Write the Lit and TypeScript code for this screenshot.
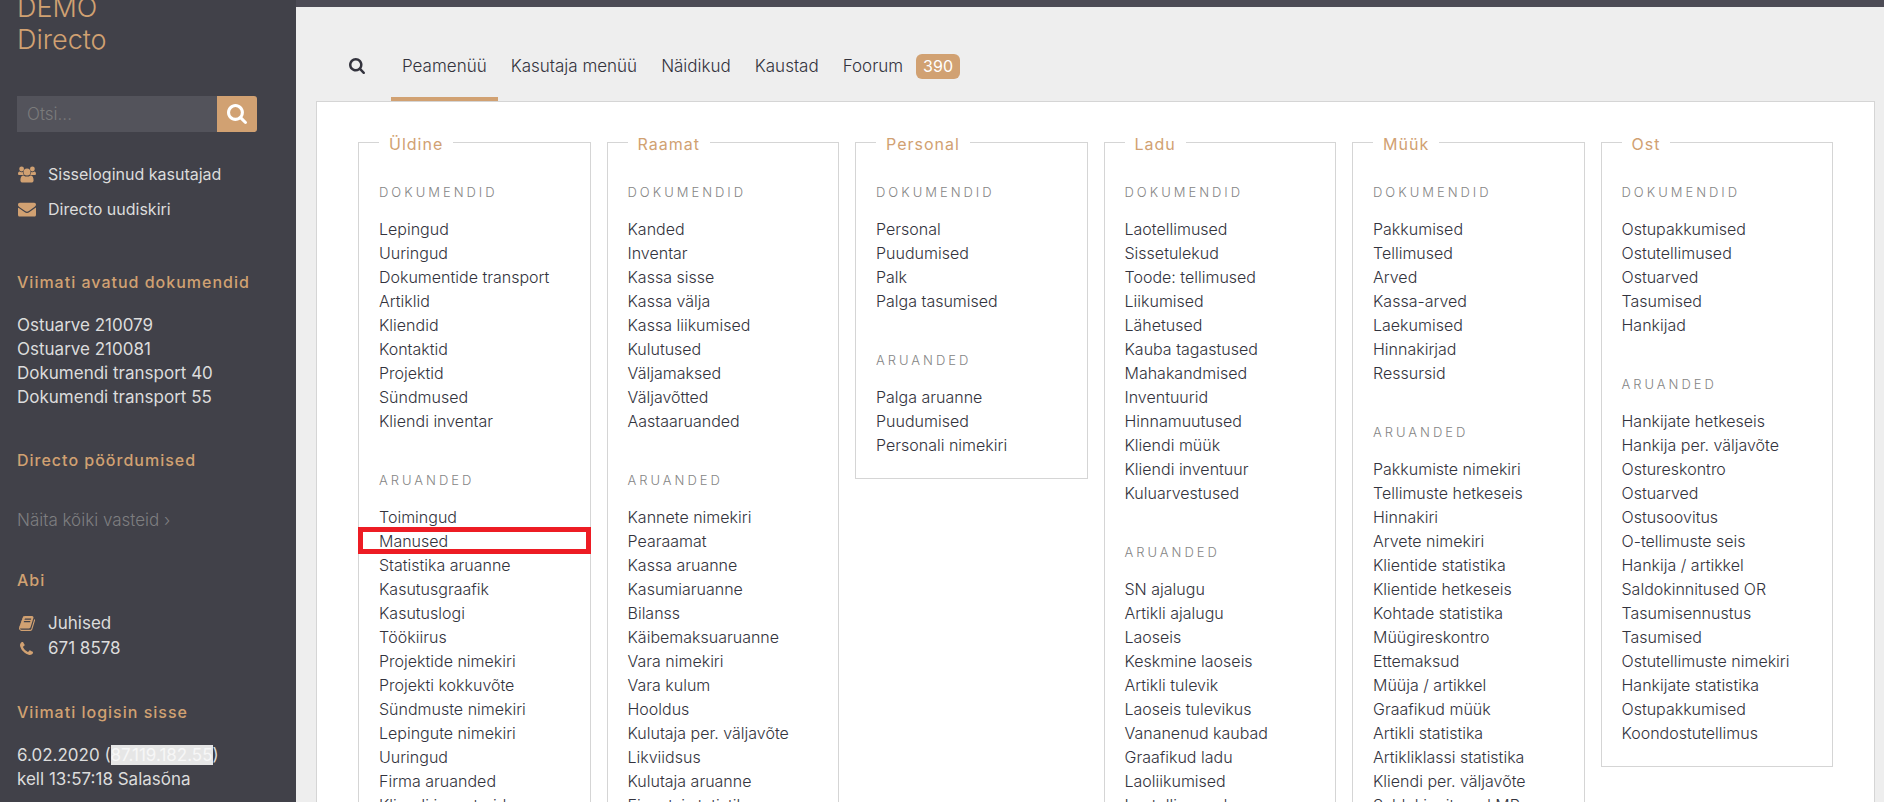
import { LitElement, html, css, svg, nothing } from "lit";
import { customElement, property, state } from "lit/decorators.js";
import { classMap } from "lit/directives/class-map.js";

const icons = {
  search: {
    box: "0 0 1664 1664",
    body: svg`<path d="M1152 704q0-185-131.500-316.500T704 256 387.500 387.500 256 704t131.500 316.500T704 1152t316.500-131.500T1152 704zm512 832q0 52-38 90t-90 38q-54 0-90-38l-343-342q-179 124-399 124-143 0-273.500-55.500t-225-150-150-225T0 704t55.500-273.500 150-225 225-150T704 0t273.500 55.500 225 150 150 225T1408 704q0 220-124 399l343 343q37 37 37 90z"/>`,
  },
  users: {
    box: "0 0 18 17",
    body: svg`<circle cx="3.600" cy="3" r="2.400"/><circle cx="14.400" cy="3" r="2.400"/><path d="M0 8.200C0 6.500.6 5.500 1.600 5.500c.6.400 1.300.7 2 .7.500 0 .9-.1 1.300-.3 0 1.200.3 2.100.9 3H1.700C.7 8.900 0 8.700 0 8.200zM18 8.200c0-1.700-.6-2.700-1.600-2.700-.6.400-1.300.7-2 .7-.5 0-.9-.1-1.300-.3 0 1.200-.3 2.100-.9 3h4.100c1 0 1.700-.2 1.700-.7z"/><circle cx="9" cy="6" r="3.500"/><path d="M5.600 9.400c1 .8 2.100 1.200 3.400 1.200s2.400-.4 3.400-1.200c2.200 0 3.200 2 3.200 4.900 0 1.400-.9 2.300-2.400 2.300H4.800c-1.500 0-2.400-.9-2.400-2.300 0-2.900 1-4.900 3.200-4.900z"/>`,
  },
  mail: {
    box: "0 0 18 16",
    body: svg`<path d="M0 3.200C0 2 .7 1.200 1.800 1.200h14.400C17.300 1.200 18 2 18 3.100c0 .9-.6 1.700-1.300 2.200L10.900 9.400c-1.300 1-2.500 1-3.800 0L1.300 5.400C.6 4.900 0 4.100 0 3.200z"/><path d="M0 5.900c.2.300.5.500.8.700l5.700 4c1.700 1.200 3.300 1.200 5 0l5.700-4c.3-.2.600-.5.800-.7v7.300c0 1.200-.7 1.900-1.800 1.900H1.800C.7 15.100 0 14.400 0 13.200z"/>`,
  },
  book: {
    box: "0 128 1664 1536",
    body: svg`<path d="M1639 478q40 57 18 129l-275 906q-19 64-76.500 107.500t-122.500 43.500h-923q-77 0-148.500-53.500t-99.500-131.500q-24-67-2-127 0-4 3-27t4-37q1-8-3-21.500t-3-19.500q2-11 8-21t16.500-23.500 16.500-23.500q23-38 45-91.500t30-91.500q3-10 .5-30t-.5-28q3-11 17-28t17-23q21-36 42-92t25-90q1-9-2.500-32t.5-28q4-13 22-30.500t22-22.500q19-26 42.500-84.500t27.500-96.500q1-8-3-25.500t-2-26.500q2-8 9-18t18-23 17-21q8-12 16.500-30.500t15-35 16-36 19.500-32 26.500-23.500 36-11.500 47.500 5.500l-1 3q38-9 51-9h761q74 0 114 56t18 130l-274 906q-36 119-71.500 153.500t-128.500 34.500h-869q-27 0-38 15-11 16-1 43 24 70 144 70h923q29 0 56-15.500t35-41.500l300-987q7-22 5-57 38 15 59 43zm-1064 2q-4 13 2 22.500t20 9.500h608q13 0 25.500-9.500t16.500-22.500l21-64q4-13-2-22.500t-20-9.500h-608q-13 0-25.500 9.500t-16.500 22.500zm-83 256q-4 13 2 22.500t20 9.500h608q13 0 25.500-9.500t16.500-22.500l21-64q4-13-2-22.500t-20-9.500h-608q-13 0-25.500 9.500t-16.500 22.500z"/>`,
  },
  phone: {
    box: "0 0 1408 1408",
    body: svg`<path d="M1408 1112q0 27-10 70.500t-21 68.500q-21 50-122 106-94 51-186 51-27 0-53-3.500t-57.500-12.500-47-14.500-55.500-20.500-49-18q-98-35-175-83-127-79-264-216t-216-264q-48-77-83-175-3-9-18-49t-20.500-55.500-14.500-47-12.500-57.500-3.500-53q0-92 51-186 56-101 106-122 25-11 68.500-21t70.500-10q14 0 21 3 18 6 53 76 11 19 30 54t35 63.500 31 53.500q3 4 17.500 25t21.500 35.500 7 28.500q0 20-28.500 50t-62 55-62 53-28.500 46q0 9 5 22.500t8.500 20.500 14 24 11.500 19q76 137 174 235t235 174q2 1 19 11.500t24 14 20.500 8.500 22.500 5q18 0 46-28.500t53-62 55-62 50-28.500q14 0 28.500 7t35.500 21.500 25 17.500q25 15 53.500 31t63.500 35 54 30q70 35 76 53 3 7 3 21z"/>`,
  },
};

type IconName = keyof typeof icons;

@customElement("app-icon")
class AppIcon extends LitElement {
  @property() name: IconName = "search";

  static styles = css`
    :host { display: inline-flex; }
    svg { display: block; width: 100%; height: 100%; fill: currentColor; }
  `;

  render() {
    const icon = icons[this.name];
    return html`<svg viewBox=${icon.box} aria-hidden="true">${icon.body}</svg>`;
  }
}

interface Group { title: string; items: string[]; marked?: string; }
interface Section { title: string; groups: Group[]; }

const docs = (...items: string[]): Group => ({ title: "Dokumendid", items });
const reports = (...items: string[]): Group => ({ title: "Aruanded", items });

const sections: Section[] = [
  {
    title: "Üldine",
    groups: [
      docs("Lepingud", "Uuringud", "Dokumentide transport", "Artiklid", "Kliendid", "Kontaktid", "Projektid", "Sündmused", "Kliendi inventar"),
      {
        ...reports("Toimingud", "Manused", "Statistika aruanne", "Kasutusgraafik", "Kasutuslogi", "Töökiirus", "Projektide nimekiri", "Projekti kokkuvõte", "Sündmuste nimekiri", "Lepingute nimekiri", "Uuringud", "Firma aruanded", "Kliendi inventarid"),
        marked: "Manused",
      },
    ],
  },
  {
    title: "Raamat",
    groups: [
      docs("Kanded", "Inventar", "Kassa sisse", "Kassa välja", "Kassa liikumised", "Kulutused", "Väljamaksed", "Väljavõtted", "Aastaaruanded"),
      reports("Kannete nimekiri", "Pearaamat", "Kassa aruanne", "Kasumiaruanne", "Bilanss", "Käibemaksuaruanne", "Vara nimekiri", "Vara kulum", "Hooldus", "Kulutaja per. väljavõte", "Likviidsus", "Kulutaja aruanne", "Finantsi statistika"),
    ],
  },
  {
    title: "Personal",
    groups: [
      docs("Personal", "Puudumised", "Palk", "Palga tasumised"),
      reports("Palga aruanne", "Puudumised", "Personali nimekiri"),
    ],
  },
  {
    title: "Ladu",
    groups: [
      docs("Laotellimused", "Sissetulekud", "Toode: tellimused", "Liikumised", "Lähetused", "Kauba tagastused", "Mahakandmised", "Inventuurid", "Hinnamuutused", "Kliendi müük", "Kliendi inventuur", "Kuluarvestused"),
      reports("SN ajalugu", "Artikli ajalugu", "Laoseis", "Keskmine laoseis", "Artikli tulevik", "Laoseis tulevikus", "Vananenud kaubad", "Graafikud ladu", "Laoliikumised", "Laotellimused"),
    ],
  },
  {
    title: "Müük",
    groups: [
      docs("Pakkumised", "Tellimused", "Arved", "Kassa-arved", "Laekumised", "Hinnakirjad", "Ressursid"),
      reports("Pakkumiste nimekiri", "Tellimuste hetkeseis", "Hinnakiri", "Arvete nimekiri", "Klientide statistika", "Klientide hetkeseis", "Kohtade statistika", "Müügireskontro", "Ettemaksud", "Müüja / artikkel", "Graafikud müük", "Artikli statistika", "Artikliklassi statistika", "Kliendi per. väljavõte", "Saldokinnitused MR"),
    ],
  },
  {
    title: "Ost",
    groups: [
      docs("Ostupakkumised", "Ostutellimused", "Ostuarved", "Tasumised", "Hankijad"),
      reports("Hankijate hetkeseis", "Hankija per. väljavõte", "Ostureskontro", "Ostuarved", "Ostusoovitus", "O-tellimuste seis", "Hankija / artikkel", "Saldokinnitused OR", "Tasumisennustus", "Tasumised", "Ostutellimuste nimekiri", "Hankijate statistika", "Ostupakkumised", "Koondostutellimus"),
    ],
  },
];

@customElement("menu-section")
class MenuSection extends LitElement {
  @property({ attribute: false }) section!: Section;

  static styles = css`
    :host { display: block; min-width: 0; }
    fieldset {
      margin: 0;
      min-width: 0;
      padding: 24px 20px 21px;
      border: 1px solid #d5d5d5;
    }
    legend {
      padding: 4px 10px 0;
      font-size: 16px;
      line-height: 24px;
      font-weight: 400;
      letter-spacing: 1px;
      color: #d1a172;
    }
    h3 {
      margin: 0 0 13px;
      font-size: 13px;
      line-height: 24px;
      font-weight: 300;
      letter-spacing: 3px;
      text-transform: uppercase;
      color: #858585;
    }
    ul { margin: 0; padding: 0; list-style: none; }
    ul + h3 { margin-top: 35px; }
    li { position: relative; }
    a {
      display: block;
      line-height: 24px;
      color: inherit;
      text-decoration: none;
      white-space: nowrap;
    }
    a:hover { color: #d1a172; }
    .marked::after {
      content: "";
      position: absolute;
      inset: -2px -21px -1px;
      border: 5px solid #ed1c24;
      pointer-events: none;
    }
  `;

  render() {
    return html`
      <fieldset>
        <legend>${this.section.title}</legend>
        ${this.section.groups.map((g) => html`
          <h3>${g.title}</h3>
          <ul>
            ${g.items.map((item) => html`
              <li class=${classMap({ marked: item === g.marked })}><a href="#">${item}</a></li>
            `)}
          </ul>
        `)}
      </fieldset>
    `;
  }
}

@customElement("side-bar")
class SideBar extends LitElement {
  static styles = css`
    :host {
      display: block;
      box-sizing: border-box;
      padding: 0 17px;
      overflow: hidden;
      background: #414149;
      color: #dcdcdc;
      font-size: 17px;
      font-weight: 400;
    }
    h1 {
      margin: -8px 0 40px;
      font-size: 27px;
      line-height: 32px;
      font-weight: 300;
      color: #d1a172;
    }
    h2 {
      margin: 0 0 19px;
      font-size: 16px;
      line-height: 24px;
      font-weight: 500;
      letter-spacing: 1px;
      white-space: nowrap;
      color: #d1a172;
    }
    form { display: flex; width: 240px; max-width: 100%; margin-bottom: 25px; }
    input {
      flex: 1;
      min-width: 0;
      height: 36px;
      box-sizing: border-box;
      padding: 0 10px;
      border: 0;
      border-radius: 0;
      background: #53535b;
      color: #fff;
      font: inherit;
      font-weight: 300;
    }
    input::placeholder { color: #7b7b7b; opacity: 1; }
    button {
      display: flex;
      align-items: center;
      justify-content: center;
      width: 40px;
      padding: 0;
      border: 0;
      border-radius: 0 3px 3px 0;
      background: #d1a172;
      color: #fff;
    }
    button app-icon { width: 20px; height: 20px; }
    p, ul { margin: 0; padding: 0; list-style: none; line-height: 24px; }
    a { color: inherit; text-decoration: none; }
    section { margin-bottom: 39px; white-space: nowrap; }
    .links a { display: flex; align-items: center; gap: 12px; line-height: 25px; }
    .links app-icon { width: 18px; height: 17px; padding-left: 1px; color: #d1a172; }
    .links .book { width: 16px; height: 15px; padding: 0 1px 0 2px; }
    .links .phone { width: 13px; height: 13px; padding: 0 3px; }
    .links.top { margin-bottom: 43px; }
    .links.top a { font-size: 16px; line-height: 35px; }
    .requests { margin-bottom: 36px; }
    .more { padding-top: 17px; color: #7e7e80; font-weight: 300; }
    .address { background: #e6e6e6; color: #f7f7f7; }
  `;

  render() {
    return html`
      <h1>DEMO<br />Directo</h1>
      <form role="search" @submit=${(e: Event) => e.preventDefault()}>
        <input type="text" placeholder="Otsi..." aria-label="Otsi" />
        <button type="submit" aria-label="Otsi"><app-icon name="search"></app-icon></button>
      </form>
      <ul class="links top">
        <li><a href="#"><app-icon name="users"></app-icon>Sisseloginud kasutajad</a></li>
        <li><a href="#"><app-icon name="mail"></app-icon>Directo uudiskiri</a></li>
      </ul>
      <section>
        <h2>Viimati avatud dokumendid</h2>
        <ul>
          ${["Ostuarve 210079", "Ostuarve 210081", "Dokumendi transport 40", "Dokumendi transport 55"].map(
            (d) => html`<li><a href="#">${d}</a></li>`
          )}
        </ul>
      </section>
      <section class="requests">
        <h2>Directo pöördumised</h2>
        <p class="more"><a href="#">Näita kõiki vasteid ›</a></p>
      </section>
      <section>
        <h2>Abi</h2>
        <ul class="links">
          <li><a href="#"><app-icon class="book" name="book"></app-icon>Juhised</a></li>
          <li><a href="tel:6718578"><app-icon class="phone" name="phone"></app-icon>671 8578</a></li>
        </ul>
      </section>
      <section>
        <h2>Viimati logisin sisse</h2>
        <p>6.02.2020 (<span class="address">87.119.182.55</span>)<br />kell 13:57:18 Salasõna</p>
      </section>
    `;
  }
}

@customElement("app-root")
class AppRoot extends LitElement {
  @state() private active = "Peamenüü";

  private tabs: { label: string; badge?: number }[] = [
    { label: "Peamenüü" },
    { label: "Kasutaja menüü" },
    { label: "Näidikud" },
    { label: "Kaustad" },
    { label: "Foorum", badge: 390 },
  ];

  static styles = css`
    :host {
      display: grid;
      grid-template-columns: 296px minmax(0, 1fr);
      height: 100vh;
      overflow: hidden;
      background: #eee;
      color: #33333d;
      font: 300 16px/24px Inter, "Noto Sans", sans-serif;
    }
    main {
      min-width: 0;
      padding: 0 9px 0 20px;
      border-top: 7px solid #4c4b55;
      overflow: hidden;
    }
    nav { display: flex; gap: 2px; margin-top: 31px; padding-left: 33px; }
    nav button {
      display: flex;
      align-items: center;
      height: 63px;
      box-sizing: border-box;
      padding: 0 11px 3px;
      border: 0;
      border-bottom: 4px solid transparent;
      background: none;
      color: inherit;
      font: inherit;
      font-size: 17px;
      white-space: nowrap;
    }
    nav .find { padding: 0 0 3px; margin-right: 24px; }
    nav .find app-icon { width: 16px; height: 16px; }
    nav .active { border-bottom-color: #d1a172; }
    .badge {
      margin-left: 13px;
      padding: 0 7px;
      border-radius: 6px;
      background: #d1a172;
      color: #fff;
      font-size: 16px;
      line-height: 25px;
      font-weight: 400;
    }
    .panel {
      display: grid;
      grid-template-columns: repeat(6, minmax(0, 1fr));
      align-items: start;
      gap: 16px;
      padding: 26px 41px 40px;
      border: 1px solid #d5d5d5;
      background: #fff;
    }
  `;

  render() {
    return html`
      <side-bar></side-bar>
      <main>
        <nav>
          <button class="find" aria-label="Otsi"><app-icon name="search"></app-icon></button>
          ${this.tabs.map((t) => html`
            <button class=${classMap({ active: t.label === this.active })} @click=${() => (this.active = t.label)}>
              ${t.label}${t.badge ? html`<span class="badge">${t.badge}</span>` : nothing}
            </button>
          `)}
        </nav>
        <div class="panel">
          ${sections.map((s) => html`<menu-section .section=${s}></menu-section>`)}
        </div>
      </main>
    `;
  }
}
